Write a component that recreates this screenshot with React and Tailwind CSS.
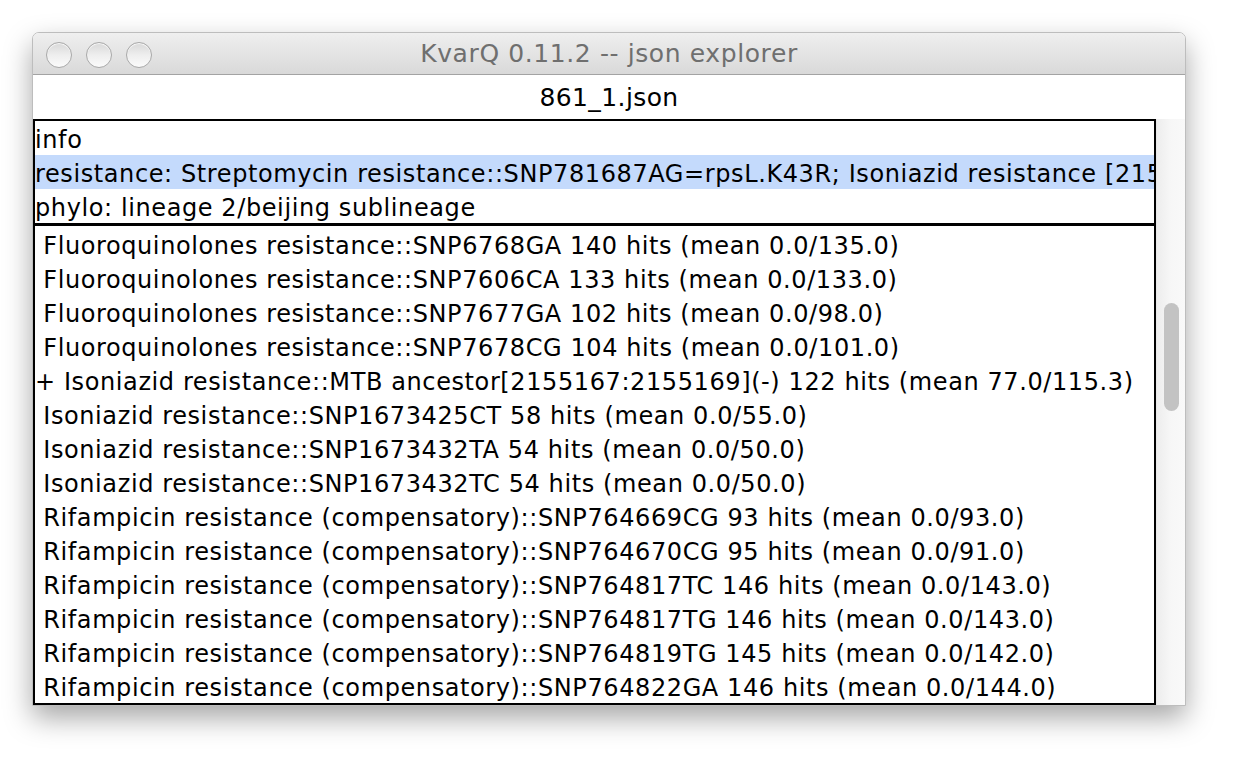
const infoRows = [
  { text: 'info' },
  { text: 'resistance: Streptomycin resistance::SNP781687AG=rpsL.K43R; Isoniazid resistance [2155167:2155169](-) ancestor', selected: true },
  { text: 'phylo: lineage 2/beijing sublineage' },
]

const hits = [
  ' Fluoroquinolones resistance::SNP6768GA 140 hits (mean 0.0/135.0)',
  ' Fluoroquinolones resistance::SNP7606CA 133 hits (mean 0.0/133.0)',
  ' Fluoroquinolones resistance::SNP7677GA 102 hits (mean 0.0/98.0)',
  ' Fluoroquinolones resistance::SNP7678CG 104 hits (mean 0.0/101.0)',
  '+ Isoniazid resistance::MTB ancestor[2155167:2155169](-) 122 hits (mean 77.0/115.3)',
  ' Isoniazid resistance::SNP1673425CT 58 hits (mean 0.0/55.0)',
  ' Isoniazid resistance::SNP1673432TA 54 hits (mean 0.0/50.0)',
  ' Isoniazid resistance::SNP1673432TC 54 hits (mean 0.0/50.0)',
  ' Rifampicin resistance (compensatory)::SNP764669CG 93 hits (mean 0.0/93.0)',
  ' Rifampicin resistance (compensatory)::SNP764670CG 95 hits (mean 0.0/91.0)',
  ' Rifampicin resistance (compensatory)::SNP764817TC 146 hits (mean 0.0/143.0)',
  ' Rifampicin resistance (compensatory)::SNP764817TG 146 hits (mean 0.0/143.0)',
  ' Rifampicin resistance (compensatory)::SNP764819TG 145 hits (mean 0.0/142.0)',
  ' Rifampicin resistance (compensatory)::SNP764822GA 146 hits (mean 0.0/144.0)',
]

function TrafficLight() {
  return (
    <div className="w-[26px] h-[26px] rounded-full border border-[#a9a9a9] bg-gradient-to-b from-[#d8d8d8] via-[#eeeeee] to-[#fbfbfb] shadow-[inset_0_1px_1px_rgba(255,255,255,0.9)]" />
  )
}

export default function App() {
  return (
    <div className="w-[1254px] h-[772px] bg-white pl-[32px] pt-[32px] font-['DejaVu_Sans',sans-serif]">
      <div className="w-[1154px] flex flex-col rounded-t-[7px] border border-[#bdbdbd] bg-white shadow-[0_12px_28px_rgba(0,0,0,0.35)] overflow-hidden">
        {/* title bar */}
        <div className="relative h-[42px] flex items-center justify-center bg-gradient-to-b from-[#efefef] to-[#d9d9d9] border-b border-[#a3a3a3]">
          <div className="absolute left-[13px] top-[9px] flex gap-[14px]">
            <TrafficLight />
            <TrafficLight />
            <TrafficLight />
          </div>
          <span className="text-[25px] tracking-[0.6px] text-[#6f6f6f] leading-none">KvarQ 0.11.2 -- json explorer</span>
        </div>

        <div className="h-[44px] flex items-center justify-center text-[25px] tracking-[0.4px] text-black leading-none">861_1.json</div>

        <div className="flex">
          <div className="w-[1123px] flex flex-col">
            <div className="border-2 border-black">
              {infoRows.map((r, i) => (
                <div
                  key={i}
                  className={`h-[34px] pt-[3px] flex items-center whitespace-nowrap overflow-hidden text-[24px] tracking-[0.6px] text-black ${r.selected ? 'bg-[#c4dafc]' : ''}`}
                >
                  {r.text}
                </div>
              ))}
            </div>
            <div className="border-2 border-t-[1px] border-black pt-[1px]">
              {hits.map((t, i) => (
                <div key={i} className="h-[34px] pt-[3px] flex items-center whitespace-pre overflow-hidden text-[24px] tracking-[0.6px] text-black">
                  {t}
                </div>
              ))}
            </div>
          </div>
          <div className="flex-1 relative bg-gradient-to-r from-[#ededed] via-[#f7f7f7] to-[#f9f9f9] border-l border-[#e6e6e6]">
            <div className="absolute left-[7px] top-[184px] w-[15px] h-[108px] rounded-full bg-[#c3c3c3]" />
          </div>
        </div>
      </div>
    </div>
  )
}
